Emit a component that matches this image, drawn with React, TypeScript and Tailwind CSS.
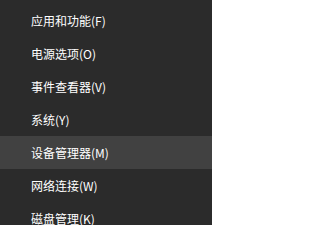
import React from "react";

const items = [
  "应用和功能(F)",
  "电源选项(O)",
  "事件查看器(V)",
  "系统(Y)",
  "设备管理器(M)",
  "网络连接(W)",
  "磁盘管理(K)",
];

export default function App() {
  return (
    <div
      className="w-[212px] h-[225px] bg-[#2b2b2b] overflow-hidden pt-[4px]"
      style={{ fontFamily: '"Noto Sans CJK SC", "Noto Sans", sans-serif' }}
    >
      {items.map((t, i) => (
        <div
          key={t}
          className={`h-[33px] flex items-center pl-[31px] text-[12px] text-white leading-none ${
            i === 4 ? "bg-[#414141]" : ""
          }`}
        >
          {t}
        </div>
      ))}
    </div>
  );
}
